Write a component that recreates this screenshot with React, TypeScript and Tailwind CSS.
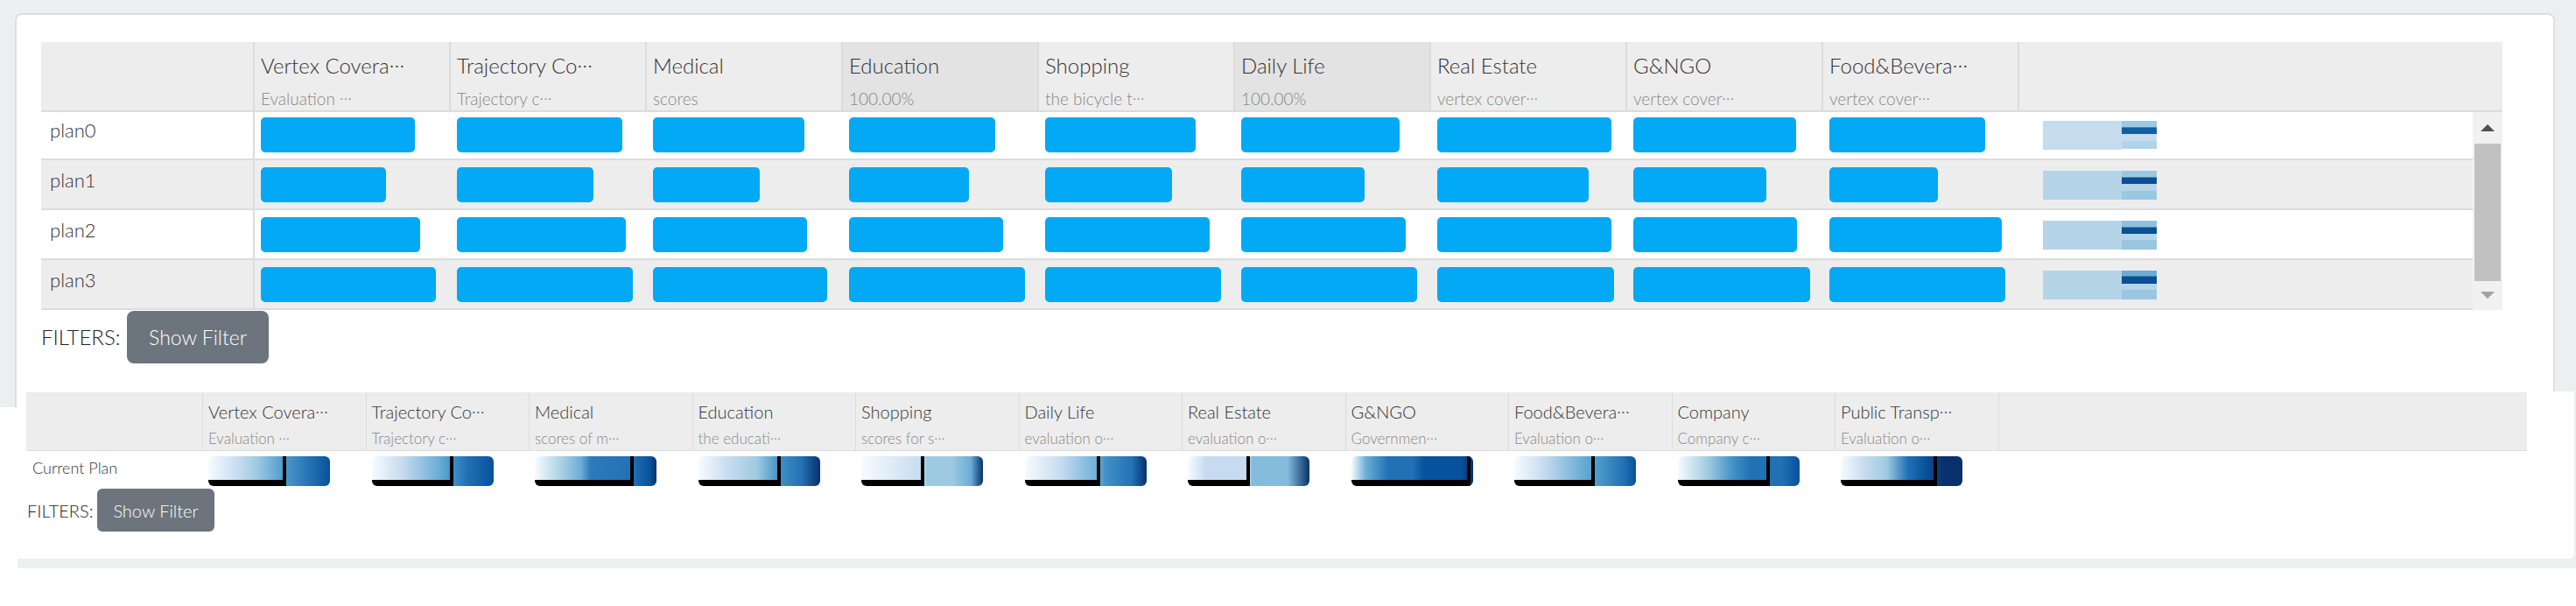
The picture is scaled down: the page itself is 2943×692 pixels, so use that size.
import React from "react";

type Head = { title: string; sub: string; tCut?: boolean; sCut?: boolean; hi?: boolean };

const HEAD1: Head[] = [
    { title: "Vertex Covera", tCut: true, sub: "Evaluation ", sCut: true },
    { title: "Trajectory Co", tCut: true, sub: "Trajectory c", sCut: true },
    { title: "Medical", sub: "scores" },
    { title: "Education", sub: "100.00%", hi: true },
    { title: "Shopping", sub: "the bicycle t", sCut: true },
    { title: "Daily Life", sub: "100.00%", hi: true },
    { title: "Real Estate", sub: "vertex cover", sCut: true },
    { title: "G&NGO", sub: "vertex cover", sCut: true },
    { title: "Food&Bevera", tCut: true, sub: "vertex cover", sCut: true },
];

type Stripe = [number, string];

const PLANS: { name: string; bars: number[]; left: string; stripes: Stripe[] }[] = [
    {
        name: "plan0",
        bars: [176, 189, 173, 167, 172, 181, 199, 186, 178],
        left: "#c6dcee",
        stripes: [[7, "#9ccae2"], [1, "#4f86b8"], [7, "#115ea7"], [8, "#c4dcee"], [9, "#b0d4ea"]],
    },
    {
        name: "plan1",
        bars: [143, 156, 122, 137, 145, 141, 173, 152, 124],
        left: "#b6d4e8",
        stripes: [[7, "#9ac8e0"], [1, "#4f86b8"], [7, "#0b4f94"], [8, "#b6d4e8"], [10, "#9ac8e0"]],
    },
    {
        name: "plan2",
        bars: [182, 193, 176, 176, 188, 188, 199, 187, 197],
        left: "#b6d4e8",
        stripes: [[7, "#90c0df"], [1, "#4f86b8"], [7, "#0b4f94"], [7, "#b6d4e8"], [11, "#99c6e0"]],
    },
    {
        name: "plan3",
        bars: [200, 201, 199, 201, 201, 201, 202, 202, 201],
        left: "#b6d4e8",
        stripes: [[6, "#6badd5"], [1, "#3f79ad"], [8, "#0b4f94"], [7, "#b6d4e8"], [11, "#99c6e0"]],
    },
];

type Head2 = Head & { pos: number; stops: string[] };

const HEAD2: Head2[] = [
    { title: "Vertex Covera", tCut: true, sub: "Evaluation ", sCut: true, pos: 64,
        stops: ["#f7fbff 0%", "#c6dbef 25%", "#9ecae1 40%", "#4f9bcc 62%", "#2a78b8 80%", "#08519c 100%"] },
    { title: "Trajectory Co", tCut: true, sub: "Trajectory c", sCut: true, pos: 67,
        stops: ["#f7fbff 0%", "#c6dbef 25%", "#6baed6 55%", "#4292c6 66%", "#2171b5 78%", "#08519c 100%"] },
    { title: "Medical", sub: "scores of m", sCut: true, pos: 81,
        stops: ["#f7fbff 0%", "#9ecae1 25%", "#6baed6 38%", "#2b7bba 46%", "#2171b5 80%", "#08519c 95%", "#08306b 100%"] },
    { title: "Education", sub: "the educati", sCut: true, pos: 68,
        stops: ["#f7fbff 0%", "#c6dbef 25%", "#9ecae1 48%", "#4292c6 66%", "#2171b5 85%", "#08306b 100%"] },
    { title: "Shopping", sub: "scores for s", sCut: true, pos: 52,
        stops: ["#f7fbff 0%", "#c6dbef 50%", "#9ecae1 54%", "#9ecae1 74%", "#6baed6 90%", "#08306b 100%"] },
    { title: "Daily Life", sub: "evaluation o", sCut: true, pos: 62,
        stops: ["#f7fbff 0%", "#c6dbef 30%", "#6baed6 60%", "#4292c6 66%", "#2171b5 88%", "#08306b 100%"] },
    { title: "Real Estate", sub: "evaluation o", sCut: true, pos: 51,
        stops: ["#f7fbff 0%", "#c6dbef 15%", "#c6dbef 50%", "#85bcdc 53%", "#85bcdc 82%", "#08306b 100%"] },
    { title: "G&NGO", sub: "Governmen", sCut: true, pos: 98,
        stops: ["#f7fbff 0%", "#6baed6 12%", "#2171b5 30%", "#2171b5 50%", "#08519c 60%", "#08519c 90%", "#08306b 100%"] },
    { title: "Food&Bevera", tCut: true, sub: "Evaluation o", sCut: true, pos: 66,
        stops: ["#f7fbff 0%", "#c6dbef 25%", "#6baed6 55%", "#4a98c9 70%", "#2171b5 90%", "#08519c 100%"] },
    { title: "Company", sub: "Company c", sCut: true, pos: 76,
        stops: ["#f7fbff 0%", "#9ecae1 25%", "#4292c6 45%", "#2171b5 60%", "#2171b5 85%", "#08519c 100%"] },
    { title: "Public Transp", tCut: true, sub: "Evaluation o", sCut: true, pos: 79,
        stops: ["#f7fbff 0%", "#c6dbef 20%", "#9ecae1 38%", "#2171b5 55%", "#08519c 70%", "#08306b 85%", "#08306b 100%"] },
];

// ellipsis drawn at mid height, as the CJK system font in the app does
const Ell = () => <span className="relative -top-[0.3em] tracking-[-0.05em]">…</span>;

const FilterBar: React.FC<{ big?: boolean }> = ({ big }) =>
    big ? (
        <div className="flex items-center h-[60px] mt-[1px]">
            <span className="w-[98px] text-[24px] text-[#222]">FILTERS:</span>
            <button className="w-[162px] h-[60px] rounded-[8px] bg-[#6c757d] text-white text-[23px]">
                Show Filter
            </button>
        </div>
    ) : (
        <div className="flex items-center h-[49px] pl-[1px]">
            <span className="w-[80px] text-[20px] text-[#222]">FILTERS:</span>
            <button className="w-[134px] h-[49px] rounded-[6px] bg-[#6c757d] text-white text-[20px]">
                Show Filter
            </button>
        </div>
    );

const PlanTable: React.FC = () => (
    <div className="w-full">
        {/* header */}
        <div className="flex h-[80px] bg-[#ededed] border-b-2 border-[#dcdcdc]">
            <div className="w-[242px] shrink-0" />
            {HEAD1.map((h) => (
                <div
                    key={h.title}
                    className={`w-[224px] shrink-0 border-l-2 border-[#dcdcdc] pl-[7px] pt-[12px] whitespace-nowrap ${
                        h.hi ? "bg-[#e3e3e3]" : ""
                    }`}
                >
                    <div className="text-[24px] leading-[29px] text-[#333]">
                        {h.title}
                        {h.tCut && <Ell />}
                    </div>
                    <div className="mt-[13px] text-[19px] leading-[22px] text-[#888]">
                        {h.sub}
                        {h.sCut && <Ell />}
                    </div>
                </div>
            ))}
            <div className="flex-1 border-l-2 border-[#dcdcdc]" />
        </div>

        {/* body + scrollbar */}
        <div className="flex h-[226px] overflow-hidden">
            <div className="flex-1 -mt-[2px]">
                {PLANS.map((p, i) => (
                    <div
                        key={p.name}
                        className={`flex h-[57px] border-b-2 border-[#dcdcdc] ${i % 2 ? "bg-[#ededed]" : "bg-white"}`}
                    >
                        <div className="w-[244px] shrink-0 border-r-2 border-[#dcdcdc] pl-[10px] pt-[10px] text-[22px] leading-[26px] text-[#333]">
                            {p.name}
                        </div>
                        {p.bars.map((w, j) => (
                            <div
                                key={j}
                                className={`${j === 0 ? "w-[222px] pl-[7px]" : "w-[224px] pl-[9px]"} shrink-0 pt-[8px]`}
                            >
                                <div className="h-[40px] rounded-[5px] bg-[#03a9f4]" style={{ width: w }} />
                            </div>
                        ))}
                        <div className="flex-1 pl-[29px] pt-[12px]">
                            <div className="flex h-[33px]">
                                <div className="w-[90px]" style={{ background: p.left }} />
                                <div className="flex w-[40px] flex-col">
                                    {p.stripes.map(([hgt, c], k) => (
                                        <div key={k} style={{ height: hgt, background: c }} />
                                    ))}
                                </div>
                            </div>
                        </div>
                    </div>
                ))}
            </div>
            <div className="w-[34px] shrink-0 bg-[#f1f1f1] flex flex-col items-center pt-[14px]">
                <div className="w-0 h-0 border-x-[8px] border-x-transparent border-b-[8px] border-b-[#505050]" />
                <div className="mt-[14px] w-[30px] h-[157px] bg-[#c1c1c1]" />
                <div className="mt-[12px] w-0 h-0 border-x-[8px] border-x-transparent border-t-[8px] border-t-[#a3a3a3]" />
            </div>
        </div>

        <FilterBar big />
    </div>
);

const GradBar: React.FC<{ pos: number; stops: string[] }> = ({ pos, stops }) => (
    <div
        className="relative h-[34px] w-[139px] overflow-hidden rounded-[6px]"
        style={{ background: `linear-gradient(to right, ${stops.join(", ")})` }}
    >
        <div
            className="absolute left-0 top-0 bottom-0 border-r-[4px] border-b-[7px] border-black"
            style={{ width: `${pos}%` }}
        />
    </div>
);

const CurrentPlan: React.FC = () => (
    <div className="w-full">
        <div className="flex h-[67px] bg-[#ededed] border-b border-[#dcdcdc]">
            <div className="w-[201px] shrink-0" />
            {HEAD2.map((h, i) => (
                <div
                    key={i}
                    className="w-[186.5px] shrink-0 border-l border-[#dcdcdc] pl-[6px] pt-[10px] whitespace-nowrap"
                >
                    <div className="text-[20px] leading-[24px] text-[#333]">
                        {h.title}
                        {h.tCut && <Ell />}
                    </div>
                    <div className="mt-[9px] text-[17px] leading-[20px] text-[#888]">
                        {h.sub}
                        {h.sCut && <Ell />}
                    </div>
                </div>
            ))}
            <div className="flex-1 border-l border-[#dcdcdc]" />
        </div>

        <div className="flex h-[43px]">
            <div className="w-[201px] shrink-0 pl-[7px] pt-[8px] text-[18px] leading-[22px] text-[#333]">
                Current Plan
            </div>
            {HEAD2.map((h, i) => (
                <div key={i} className="w-[186.5px] shrink-0 pl-[7px] pt-[6px]">
                    <GradBar pos={h.pos} stops={h.stops} />
                </div>
            ))}
        </div>

        <FilterBar />
    </div>
);

export default function App() {
    return (
        <div className="w-[2943px] bg-white font-['Lato'] font-light">
            <div className="h-[465px] overflow-hidden bg-[#ebeff0] pt-[15px] pl-[17px] pr-[24px]">
                <div className="h-[480px] rounded-[8px] border-2 border-[#dcdfe1] bg-white pt-[31px] pl-[28px] pr-[58px]">
                    <PlanTable />
                </div>
            </div>

            <div className="relative -mt-[18px] pl-[20px]">
                <div className="bg-[#ebeff0] pb-[11px] pr-[2px]">
                    <div className="h-[191px] rounded-br-[6px] bg-white pt-[1px] pl-[10px] pr-[54px]">
                        <CurrentPlan />
                    </div>
                </div>
            </div>
        </div>
    );
}
